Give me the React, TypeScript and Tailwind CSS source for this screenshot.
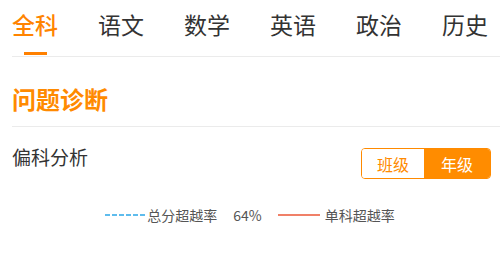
import { useState } from 'react';

const tabs = ['全科', '语文', '数学', '英语', '政治', '历史'];

export default function App() {
  const [active, setActive] = useState(0);
  const [scope, setScope] = useState<'class' | 'grade'>('grade');

  return (
    <div className="w-[500px] h-[262px] bg-white overflow-hidden font-['Noto_Sans_CJK_SC',sans-serif] text-[#333]">
      {/* Tabs */}
      <div className="ml-3 h-[57px] flex justify-between pr-3 border-b border-[#ebebeb]">
        {tabs.map((t, i) => (
          <button key={t} onClick={() => setActive(i)} className="flex flex-col items-center pt-[13px]">
            <span className={`text-[23px] leading-none ${i === active ? 'text-[#ff8400] font-medium' : 'text-[#333]'}`}>{t}</span>
            {i === active && <span className="mt-[16px] w-[23px] h-[3px] bg-[#ff8000]" />}
          </button>
        ))}
      </div>

      <div className="pl-3">
        {/* Section title */}
        <div className="h-[70px] border-b border-[#ebebeb] pt-[30px]">
          <h2 className="text-[24px] leading-none font-bold text-[#ff8a00]">问题诊断</h2>
        </div>

        {/* Row */}
        <div className="flex items-start justify-between pr-[9px] pt-[20px]">
          <span className="text-[19px] leading-none">偏科分析</span>
          <div className="mt-[1px] flex h-[31px] rounded-[4px] border border-[#ff8a00] overflow-hidden text-[16px]">
            <button onClick={() => setScope('class')} className={`w-[62px] flex items-center justify-center ${scope === 'class' ? 'bg-[#ff8c00] text-white' : 'bg-white text-[#ff8a00]'}`}>班级</button>
            <button onClick={() => setScope('grade')} className={`w-[66px] flex items-center justify-center ${scope === 'grade' ? 'bg-[#ff8c00] text-white' : 'bg-white text-[#ff8a00]'}`}>年级</button>
          </div>
        </div>

        {/* Legend */}
        <div className="mt-[29px] -ml-3 flex items-center justify-center text-[14px] text-[#555] leading-none">
          <svg width="42" height="2" className="block">
            <line x1="0" y1="1" x2="42" y2="1" stroke="#2aa6e8" strokeWidth="1.5" strokeDasharray="5 2" />
          </svg>
          <span>总分超越率</span>
          <span className="ml-[16px]">64%</span>
          <span className="ml-[16px] w-[42px] h-[2px] bg-[#f08068]" />
          <span className="ml-[5px]">单科超越率</span>
        </div>
      </div>
    </div>
  );
}
